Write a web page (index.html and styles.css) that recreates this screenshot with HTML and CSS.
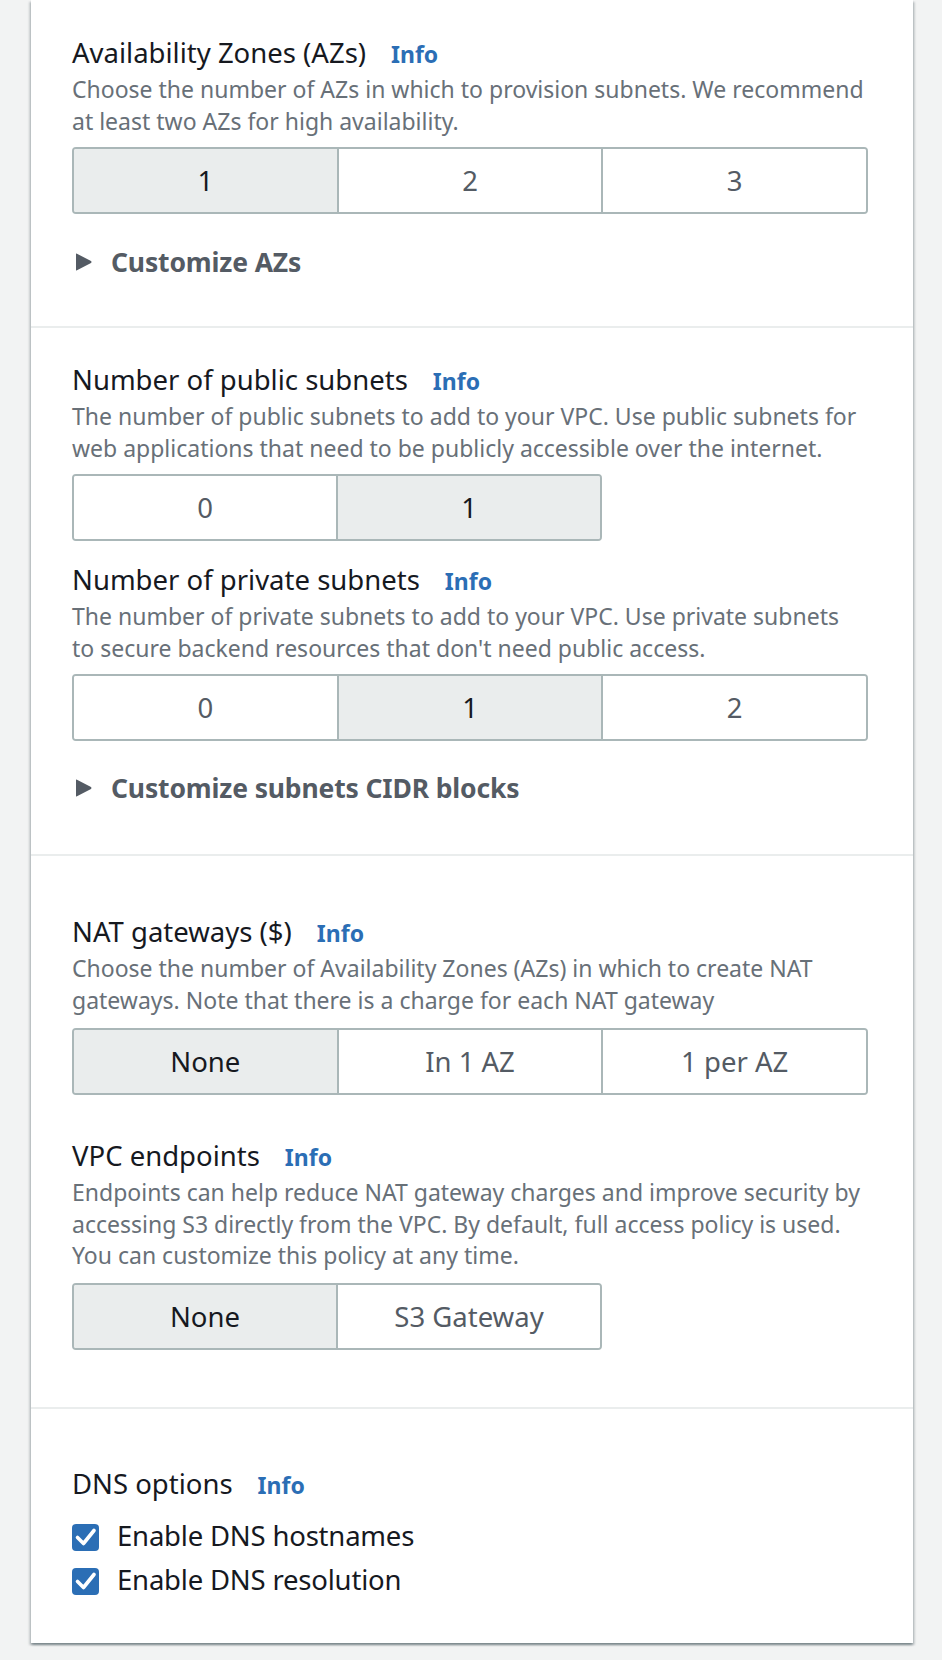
FILE: index.html
```html
<!DOCTYPE html>
<html lang="en">
<head>
<meta charset="utf-8">
<title>VPC settings</title>
<link rel="stylesheet" href="styles.css">
</head>
<body>
<div class="card">
  <section class="section s1">
    <div class="field">
      <div class="label">Availability Zones (AZs)<a class="info" href="#">Info</a></div>
      <p class="desc">Choose the number of AZs in which to provision subnets. We recommend at least two AZs for high availability.</p>
      <div class="seg">
        <div class="opt on">1</div>
        <div class="opt">2</div>
        <div class="opt">3</div>
      </div>
    </div>
    <div class="expander">
      <svg class="caret" width="20" height="20" viewBox="0 0 20 20"><path d="M4.5 1.5 L19 9 Q20 10 19 11 L4.5 18.5 Q4 18.8 4 18 V2 Q4 1.2 4.5 1.5 Z" fill="#545b64"/></svg>
      <span class="exp-text">Customize AZs</span>
    </div>
  </section>

  <section class="section s2">
    <div class="field">
      <div class="label">Number of public subnets<a class="info" href="#">Info</a></div>
      <p class="desc">The number of public subnets to add to your VPC. Use public subnets for web applications that need to be publicly accessible over the internet.</p>
      <div class="seg two">
        <div class="opt">0</div>
        <div class="opt on">1</div>
      </div>
    </div>
    <div class="field">
      <div class="label">Number of private subnets<a class="info" href="#">Info</a></div>
      <p class="desc">The number of private subnets to add to your VPC. Use private subnets to secure backend resources that don't need public access.</p>
      <div class="seg">
        <div class="opt">0</div>
        <div class="opt on">1</div>
        <div class="opt">2</div>
      </div>
    </div>
    <div class="expander">
      <svg class="caret" width="20" height="20" viewBox="0 0 20 20"><path d="M4.5 1.5 L19 9 Q20 10 19 11 L4.5 18.5 Q4 18.8 4 18 V2 Q4 1.2 4.5 1.5 Z" fill="#545b64"/></svg>
      <span class="exp-text">Customize subnets CIDR blocks</span>
    </div>
  </section>

  <section class="section s3">
    <div class="field">
      <div class="label">NAT gateways ($)<a class="info" href="#">Info</a></div>
      <p class="desc">Choose the number of Availability Zones (AZs) in which to create NAT gateways. Note that there is a charge for each NAT gateway</p>
      <div class="seg">
        <div class="opt on">None</div>
        <div class="opt">In 1 AZ</div>
        <div class="opt">1 per AZ</div>
      </div>
    </div>
    <div class="field">
      <div class="label">VPC endpoints<a class="info" href="#">Info</a></div>
      <p class="desc">Endpoints can help reduce NAT gateway charges and improve security by accessing S3 directly from the VPC. By default, full access policy is used. You can customize this policy at any time.</p>
      <div class="seg two">
        <div class="opt on">None</div>
        <div class="opt">S3 Gateway</div>
      </div>
    </div>
  </section>

  <section class="section s4">
    <div class="label">DNS options<a class="info" href="#">Info</a></div>
    <div class="checks">
      <label class="check">
        <svg class="box" width="27" height="27" viewBox="0 0 27 27"><rect x="0" y="0" width="27" height="27" rx="4" fill="#2b6eb5"/><path d="M5.5 13.5 L11.5 19.5 L22 6.5" fill="none" stroke="#fff" stroke-width="3.6" stroke-linecap="round" stroke-linejoin="round"/></svg>
        <span class="check-text">Enable DNS hostnames</span>
      </label>
      <label class="check">
        <svg class="box" width="27" height="27" viewBox="0 0 27 27"><rect x="0" y="0" width="27" height="27" rx="4" fill="#2b6eb5"/><path d="M5.5 13.5 L11.5 19.5 L22 6.5" fill="none" stroke="#fff" stroke-width="3.6" stroke-linecap="round" stroke-linejoin="round"/></svg>
        <span class="check-text">Enable DNS resolution</span>
      </label>
    </div>
  </section>
</div>
</body>
</html>
```

FILE: styles.css
```css
* { box-sizing: border-box; }
html, body { margin: 0; padding: 0; }
body {
  background: #f2f3f3;
  font-family: "Noto Sans", "Open Sans", sans-serif;
  color: #16191f;
  min-height: 1660px;
}
.card {
  margin-left: 31px;
  width: 882px;
  background: #fff;
  box-shadow: 0 2px 2px 0 rgba(0, 28, 36, .3), 2px 2px 2px 0 rgba(0, 28, 36, .15), -2px 2px 2px 0 rgba(0, 28, 36, .15);
}
.section { padding: 31px 41px 44px; }
.section + .section { border-top: 2px solid #eaeded; }
.s1 { padding-bottom: 42.5px; }
.s2 { padding-top: 30.5px; }
.s3 { padding-top: 54.5px; padding-bottom: 57px; }
.s4 { padding-top: 53px; padding-bottom: 41px; }

.label {
  font-size: 27.5px;
  line-height: 43px;
  font-weight: 400;
  color: #16191f;
}
.info {
  font-size: 23px;
  line-height: 1;
  font-weight: 700;
  color: #2b6eb5;
  margin-left: 25px;
  text-decoration: none;
}
.desc {
  font-size: 23px;
  line-height: 31.8px;
  color: #687078;
  margin: 0 0 9.5px;
  width: 792px;
}
.s3 .desc { margin-bottom: 11px; }
.field + .field { margin-top: 17px; }
.s3 .field + .field { margin-top: 39px; }

.seg {
  display: flex;
  width: 796px;
  height: 67px;
  border: 2px solid #aab7b8;
  border-radius: 4px;
  overflow: hidden;
}
.seg.two { width: 530px; }
.opt {
  flex: 1;
  display: flex;
  align-items: center;
  justify-content: center;
  font-size: 27.5px;
  color: #545b64;
  background: #fff;
}
.opt + .opt { border-left: 2px solid #aab7b8; }
.opt.on { background: #eaeded; color: #16191f; }

.expander {
  display: flex;
  align-items: center;
  height: 43px;
  margin-top: 26px;
  font-size: 26.5px;
  letter-spacing: -0.15px;
  font-weight: 700;
  color: #545b64;
}
.s2 .expander { margin-top: 25.5px; }
.caret { display: block; flex: none; }
.exp-text { margin-left: 19px; }

.checks { margin-top: 8.5px; }
.check {
  display: flex;
  align-items: flex-start;
  height: 44px;
  font-size: 27.5px;
  line-height: 44px;
  letter-spacing: -0.2px;
  color: #16191f;
}
.box { display: block; flex: none; margin-top: 10px; }
.check-text { margin-left: 18px; }
```
